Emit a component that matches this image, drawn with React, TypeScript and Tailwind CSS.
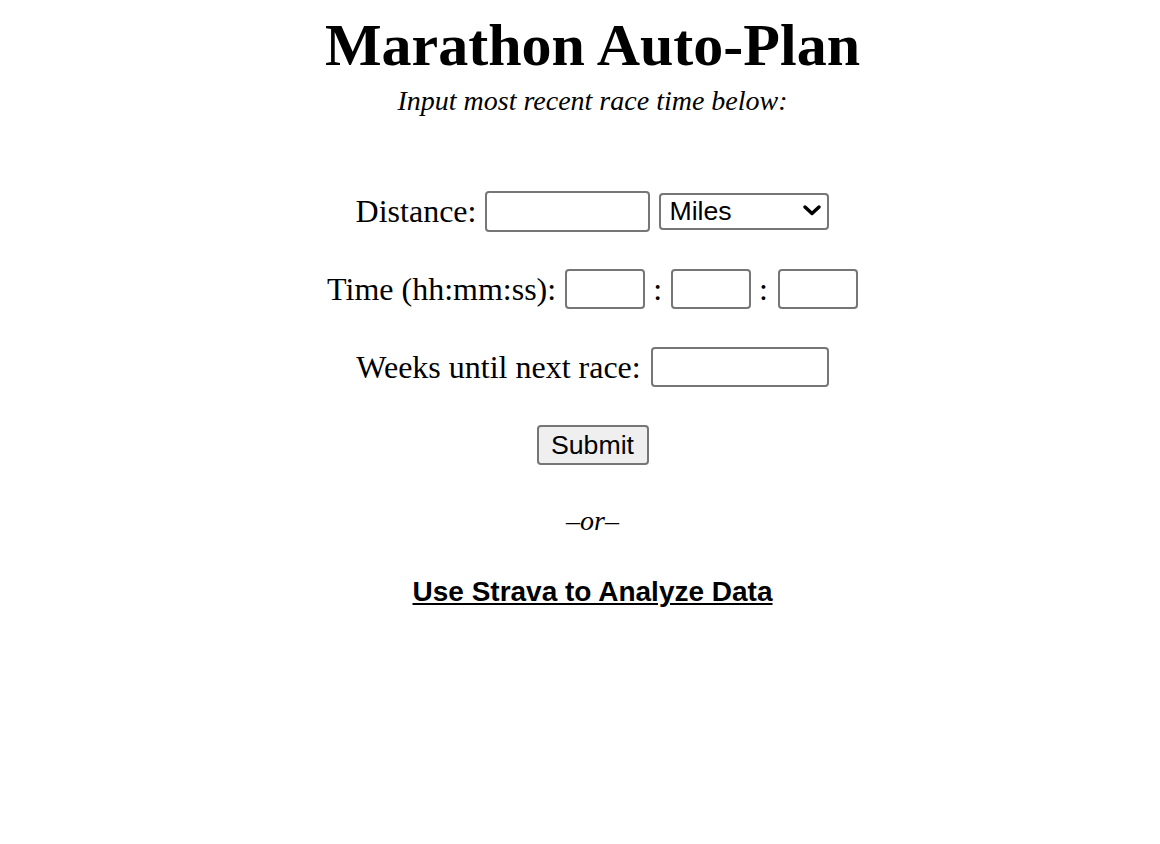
import { useState } from "react";

const serif = "font-['Liberation_Serif','Times_New_Roman',serif]";
const sans = "font-['Liberation_Sans',Arial,sans-serif]";
const box = "box-border rounded-[4px] border-2 border-[#767676] bg-white outline-none";

export default function App() {
  const [unit, setUnit] = useState("Miles");
  return (
    <div className={`flex min-h-[844px] w-full flex-col items-center bg-white pl-[25px] text-black ${serif}`}>
      <h1 className="mt-[15px] h-[60px] text-[60px] font-bold leading-[60px]">Marathon Auto-Plan</h1>
      <p className="mt-[10px] h-[32px] text-[28px] italic leading-[32px]">Input most recent race time below:</p>

      <div className="mt-[74px] flex h-10 items-center text-[32px]">
        <span>Distance:</span>
        <input className={`${box} ml-[9px] h-[41px] w-[165px] px-1 ${sans} text-[26.67px]`} />
        <div className="relative ml-[9px] flex">
          <select
            value={unit}
            onChange={(e) => setUnit(e.target.value)}
            className={`${box} block h-[37px] w-[170px] appearance-none pl-[8px] ${sans} text-[26.67px] leading-none`}
          >
            <option>Miles</option>
            <option>Kilometers</option>
          </select>
          <svg className="pointer-events-none absolute right-[7px] top-[11px] h-[12px] w-[20px]" viewBox="0 0 20 12">
            <path d="M3 3 L10 9.5 L17 3" fill="none" stroke="black" strokeWidth="3.5" strokeLinecap="round" strokeLinejoin="round" />
          </svg>
        </div>
      </div>

      <div className="mt-[38px] flex h-10 items-center text-[32px]">
        <span>Time (hh:mm:ss):</span>
        <input className={`${box} ml-[9px] h-10 w-20 px-1 ${sans} text-[26.67px]`} />
        <span className="ml-[8px] mr-[9px]">:</span>
        <input className={`${box} h-10 w-20 px-1 ${sans} text-[26.67px]`} />
        <span className="ml-[8px] mr-[10px]">:</span>
        <input className={`${box} h-10 w-20 px-1 ${sans} text-[26.67px]`} />
      </div>

      <div className="mt-[38px] flex h-10 items-center text-[32px]">
        <span>Weeks until next race:</span>
        <input className={`${box} ml-[10px] h-10 w-[178px] px-1 ${sans} text-[26.67px]`} />
      </div>

      <div className="mt-[38px] flex h-10 items-center">
        <button className={`box-border h-10 w-[112px] rounded-[4px] border-2 border-[#767676] bg-[#efefef] ${sans} text-[26.67px] leading-none`}>
          Submit
        </button>
      </div>

      <p className="mt-[40px] h-[32px] text-[28px] italic leading-[32px]">–or–</p>

      <a href="#" className={`mt-[39px] h-[32px] text-[28px] font-bold leading-[32px] underline ${sans}`}>
        Use Strava to Analyze Data
      </a>
    </div>
  );
}
